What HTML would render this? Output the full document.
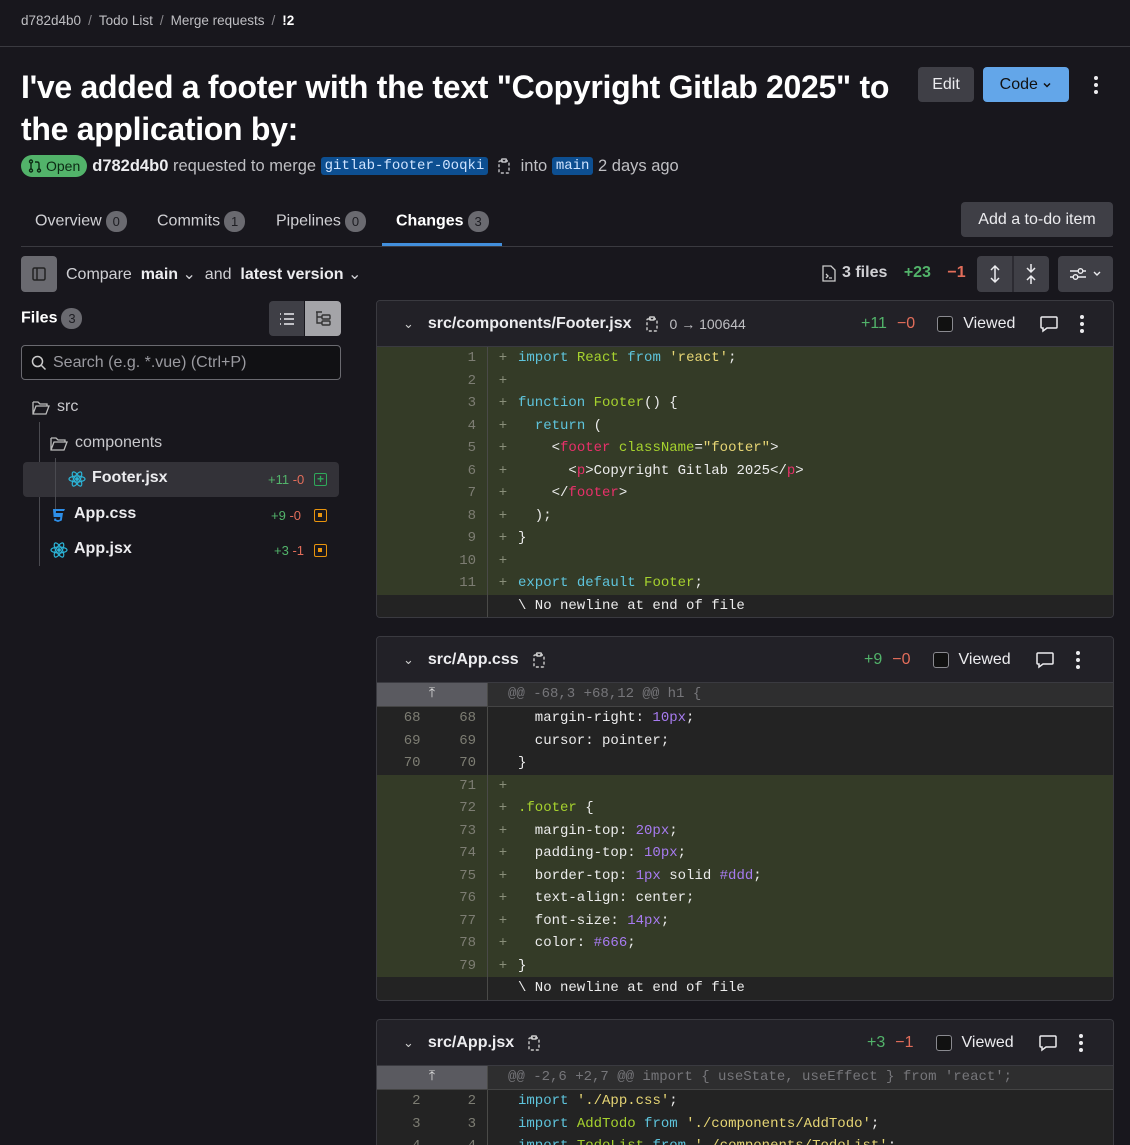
<!DOCTYPE html>
<html><head><meta charset="utf-8">
<style>
*{box-sizing:border-box;margin:0;padding:0}
html,body{width:1130px;height:1145px;overflow:hidden}
body{background:#18171d;color:#ececef;font-family:"Liberation Sans",sans-serif;position:relative}
.a{position:absolute;white-space:nowrap}
.bc{top:13px;left:21px;font-size:13.5px;color:#bfbfc3}
.bc span{margin:0 7px;color:#89888d}
.hr{position:absolute;left:0;right:0;top:46px;height:1px;background:#3a3a40}
h1{position:absolute;left:21px;top:66px;font-size:32px;line-height:42px;font-weight:bold;color:#fff;letter-spacing:-0.3px;width:890px}
.btn{position:absolute;border-radius:4px;font-size:16px;display:flex;align-items:center;justify-content:center}
.badge{display:inline-block;background:#6a6a70;color:#1d1d22;border-radius:10px;min-width:21px;height:21px;line-height:21px;text-align:center;font-size:13px;margin-left:4px;vertical-align:middle}
.mono{font-family:"Liberation Mono",monospace}
.pill{background:#0d4f91;color:#d0e4ff;border-radius:3px;padding:1px 4px;font-size:14px}
.diff{position:absolute;left:376px;width:738px;border:1px solid #3a3a40;border-radius:4px;overflow:hidden;background:#222127}
.dh{height:46px;display:flex;align-items:center;background:#222127;border-bottom:1px solid #3a3a40;font-size:16px;position:relative}
.row{height:22.5px;display:flex;font-family:"Liberation Mono",monospace;font-size:14px;line-height:22.5px}
.row .n1,.row .n2{text-align:right;color:#7d7d73}
.row .n1{width:55px;padding-right:11px}
.row .n2{width:56px;padding-right:11px}
.row .g{width:111px;display:flex;border-right:1px solid #4a4a48}
.row .p{width:30px;text-align:center;color:#8a8f7a}
.row .c{color:#ececec;white-space:pre}
.add{background:#343b27}
.ctx{background:#232323}
.hunk{height:24px;background:#2e2e2f;border-bottom:1px solid #444}
.hunk .g{background:#5a5a60;justify-content:center;color:#ddd}
.hunk .c{color:#76767a;padding-left:20px}
.k{color:#5ec4dc}.i{color:#a6d22e}.s{color:#e6d574}.t{color:#e8306a}.num{color:#a77bf0}
.vw{display:flex;align-items:center;gap:10px;color:#ececef}
.cb{width:16px;height:16px;border:1px solid #8a8a90;border-radius:3px;background:#111}
.tr{font-size:16px;color:#ececef}
</style></head><body>
<div class="a bc">d782d4b0<span>/</span>Todo List<span>/</span>Merge requests<span>/</span><b style="color:#fff">!2</b></div>
<div class="hr"></div>
<h1>I've added a footer with the text "Copyright Gitlab 2025" to the application by:</h1>
<div class="btn" style="left:918px;top:67px;width:56px;height:35px;background:#3f3f46;color:#ececef">Edit</div>
<div class="btn" style="left:983px;top:67px;width:86px;height:35px;background:#63a6e9;color:#111">Code&nbsp;<svg width="10" height="10" viewBox="0 0 10 10"><path d="M2 3.5l3 3 3-3" stroke="#111" stroke-width="1.5" fill="none"/></svg></div>
<svg class="a" style="left:1091px;top:75px" width="10" height="20"><circle cx="5" cy="3" r="2" fill="#ececef"/><circle cx="5" cy="10" r="2" fill="#ececef"/><circle cx="5" cy="17" r="2" fill="#ececef"/></svg>
<div class="a" style="left:21px;top:155px;height:22px;display:flex;align-items:center;font-size:16.5px;color:#bfbfc3">
<span style="background:#52b36a;color:#0c2a14;border-radius:11px;padding:2px 7px;font-size:14px;display:flex;align-items:center;gap:4px;height:22px"><svg width="14" height="14" viewBox="0 0 14 14" fill="none" stroke="#0c2a14" stroke-width="1.4"><circle cx="3" cy="2.5" r="1.5"/><circle cx="3" cy="11.5" r="1.5"/><circle cx="11" cy="11.5" r="1.5"/><path d="M3 4v6M11 10V5Q11 3 9 3H7"/></svg>Open</span>
<b style="color:#ececef;margin-left:5px">d782d4b0</b>&nbsp;requested to merge&nbsp;<span class="pill mono">gitlab-footer-0oqki</span>&nbsp;&nbsp;<svg width="14" height="16" viewBox="0 0 14 16" fill="none" stroke="#bfbfc3" stroke-width="1.4"><rect x="2" y="3" width="10" height="12" rx="1" stroke-dasharray="3 2"/><rect x="4.5" y="1" width="5" height="3" rx="1"/></svg>&nbsp;&nbsp;into&nbsp;<span class="pill mono">main</span>&nbsp;2 days ago</div>

<div class="a tr" style="left:35px;top:211px;color:#d0d0d4">Overview<span class="badge">0</span></div>
<div class="a tr" style="left:157px;top:211px;color:#d0d0d4">Commits<span class="badge">1</span></div>
<div class="a tr" style="left:276px;top:211px;color:#d0d0d4">Pipelines<span class="badge">0</span></div>
<div class="a tr" style="left:396px;top:211px;font-weight:bold;color:#fff">Changes<span class="badge" style="font-weight:normal">3</span></div>
<div class="a" style="left:382px;top:243px;width:120px;height:3px;background:#428fdc"></div>
<div class="a" style="left:21px;top:246px;width:1092px;height:1px;background:#3a3a40"></div>
<div class="btn" style="left:961px;top:202px;width:152px;height:35px;background:#3f3f46;color:#ececef">Add a to-do item</div>

<div class="btn" style="left:21px;top:256px;width:36px;height:36px;background:#6a6a70"><svg width="16" height="16" viewBox="0 0 16 16" fill="none" stroke="#222" stroke-width="1.5"><rect x="2" y="2" width="12" height="12" rx="1.5"/><path d="M6 2v12"/></svg></div>
<div class="a" style="left:66px;top:264px;font-size:16px;color:#d0d0d4">Compare <b style="color:#ececef">&nbsp;main</b> ⌄&nbsp; and <b style="color:#ececef">&nbsp;latest version</b> ⌄</div>
<div class="a" style="left:822px;top:264px;font-size:16px;color:#d0d0d4;display:flex;align-items:center;gap:6px"><svg width="14" height="17" viewBox="0 0 14 17" fill="none" stroke="#ccc" stroke-width="1.3"><path d="M1 1h8l4 4v11H1z"/><path d="M4 9l2 2-2 2M7 13h3"/></svg><b>3 files</b>&nbsp;<b style="color:#52b36a">+23</b>&nbsp;<b style="color:#e26d5a">−1</b></div>
<div class="btn" style="left:977px;top:256px;width:72px;height:36px;background:#3f3f46"><svg width="72" height="36"><path d="M18 10v16M14 14l4-4 4 4M14 22l4 4 4-4" stroke="#ececef" stroke-width="1.5" fill="none"/><path d="M36 0v36" stroke="#18171d"/><path d="M54 8v8M54 20v8M50 12l4 4 4-4M50 24l4-4 4 4" stroke="#ececef" stroke-width="1.5" fill="none"/></svg></div>
<div class="btn" style="left:1058px;top:256px;width:55px;height:36px;background:#3f3f46"><svg width="36" height="16" viewBox="0 0 36 16" fill="none" stroke="#ececef" stroke-width="1.4"><path d="M2 5h8M15 5h3M2 11h3M10 11h8"/><circle cx="12.5" cy="5" r="2.3"/><circle cx="7.5" cy="11" r="2.3"/><path d="M26 6l3 3 3-3"/></svg></div>

<!-- sidebar -->
<div class="a" style="left:21px;top:308px;font-size:16px;font-weight:bold;color:#fff">Files<span class="badge" style="font-weight:normal">3</span></div>
<div class="btn" style="left:269px;top:301px;width:35px;height:35px;background:#3f3f46;border-radius:4px 0 0 4px"><svg width="16" height="14" viewBox="0 0 16 14" stroke="#ececef" stroke-width="1.5"><path d="M1 2h1M5 2h10M1 7h1M5 7h10M1 12h1M5 12h10"/></svg></div>
<div class="btn" style="left:305px;top:301px;width:36px;height:35px;background:#a4a4a8;border-radius:0 4px 4px 0"><svg width="18" height="16" viewBox="0 0 18 16" fill="none" stroke="#333" stroke-width="1.4"><path d="M2 1h6M3 1v11h5M3 6h5"/><rect x="8" y="4" width="8" height="4" rx="1"/><rect x="8" y="10" width="8" height="4" rx="1"/></svg></div>
<div class="a" style="left:21px;top:345px;width:320px;height:35px;border:1px solid #6a6a70;border-radius:4px;background:#111114;display:flex;align-items:center;padding-left:9px;gap:6px;font-size:16px;color:#9a9aa0"><svg width="16" height="16" viewBox="0 0 16 16" fill="none" stroke="#ccc" stroke-width="1.5"><circle cx="6.5" cy="6.5" r="5"/><path d="M10.5 10.5l4 4"/></svg>Search (e.g. *.vue) (Ctrl+P)</div>
<svg class="a" style="left:32px;top:400px" width="18" height="16" viewBox="0 0 18 16" fill="none" stroke="#bbb" stroke-width="1.3"><path d="M1 2h5l2 2h7v2M1 2v12h13l3-8H4L1 14"/></svg>
<div class="a" style="left:57px;top:398px;font-size:16px;color:#c8c8cc">src</div>
<div class="a" style="left:39px;top:422px;width:1px;height:144px;background:#4a4a50"></div>
<svg class="a" style="left:50px;top:436px" width="18" height="16" viewBox="0 0 18 16" fill="none" stroke="#bbb" stroke-width="1.3"><path d="M1 2h5l2 2h7v2M1 2v12h13l3-8H4L1 14"/></svg>
<div class="a" style="left:75px;top:434px;font-size:16px;color:#c8c8cc">components</div>
<div class="a" style="left:23px;top:462px;width:316px;height:35px;background:#333238;border-radius:4px"></div>
<div class="a" style="left:55px;top:458px;width:1px;height:55px;background:#4a4a50"></div>
<svg class="a" style="left:68px;top:471px" width="18" height="16" viewBox="0 0 18 16" fill="none" stroke="#2cb5d8" stroke-width="1.2"><ellipse cx="9" cy="8" rx="8" ry="3"/><ellipse cx="9" cy="8" rx="8" ry="3" transform="rotate(60 9 8)"/><ellipse cx="9" cy="8" rx="8" ry="3" transform="rotate(-60 9 8)"/><circle cx="9" cy="8" r="1.3" fill="#2cb5d8"/></svg>
<div class="a" style="left:92px;top:469px;font-size:16px;font-weight:bold;color:#ececef">Footer.jsx</div>
<div class="a" style="left:268px;top:472px;font-size:13px"><span style="color:#52b36a">+11</span> <span style="color:#e26d5a">-0</span></div>
<div class="a" style="left:314px;top:473px;width:13px;height:13px;border:1.5px solid #2fa85a;border-radius:2px;color:#2fa85a;font-size:12px;line-height:10px;text-align:center;font-weight:bold">+</div>
<svg class="a" style="left:51px;top:507px" width="16" height="16" viewBox="0 0 16 16"><path d="M2 2h12l-1 2H5l-.3 2H12l-1.2 7.5L7 15l-4-1.5.3-2h2L5 12.5l2 .6 2-.6.3-2.5H2.6z" fill="#2d8ee8"/></svg>
<div class="a" style="left:74px;top:505px;font-size:16px;font-weight:bold;color:#ececef">App.css</div>
<div class="a" style="left:271px;top:508px;font-size:13px"><span style="color:#52b36a">+9</span> <span style="color:#e26d5a">-0</span></div>
<div class="a" style="left:314px;top:509px;width:13px;height:13px;border:1.5px solid #e9940d;border-radius:2px"><div style="width:4px;height:4px;background:#e9940d;margin:3px"></div></div>
<svg class="a" style="left:50px;top:542px" width="18" height="16" viewBox="0 0 18 16" fill="none" stroke="#2cb5d8" stroke-width="1.2"><ellipse cx="9" cy="8" rx="8" ry="3"/><ellipse cx="9" cy="8" rx="8" ry="3" transform="rotate(60 9 8)"/><ellipse cx="9" cy="8" rx="8" ry="3" transform="rotate(-60 9 8)"/><circle cx="9" cy="8" r="1.3" fill="#2cb5d8"/></svg>
<div class="a" style="left:74px;top:540px;font-size:16px;font-weight:bold;color:#ececef">App.jsx</div>
<div class="a" style="left:274px;top:543px;font-size:13px"><span style="color:#52b36a">+3</span> <span style="color:#e26d5a">-1</span></div>
<div class="a" style="left:314px;top:544px;width:13px;height:13px;border:1.5px solid #e9940d;border-radius:2px"><div style="width:4px;height:4px;background:#e9940d;margin:3px"></div></div>

<!-- diff 1 -->
<div class="diff" style="top:300px">
 <div class="dh"><span style="margin-left:26px;color:#ccc;font-size:13px">⌄</span><b style="margin-left:14px">src/components/Footer.jsx</b>
 <svg style="margin-left:13px" width="14" height="16" viewBox="0 0 14 16" fill="none" stroke="#ccc" stroke-width="1.4"><rect x="2" y="3" width="10" height="12" rx="1" stroke-dasharray="3 2"/><rect x="4.5" y="1" width="5" height="3" rx="1"/></svg>
 <span style="margin-left:11px;color:#bfbfc3;font-size:14px">0 → 100644</span>
 <div class="vw" style="position:absolute;left:484px"><span style="color:#52b36a">+11</span><span style="color:#e26d5a">−0</span><span class="cb" style="margin-left:12px"></span>Viewed
 <svg style="margin-left:14px" width="20" height="18" viewBox="0 0 20 18" fill="none" stroke="#ececef" stroke-width="1.5"><path d="M3 2h14a1 1 0 011 1v9a1 1 0 01-1 1H8l-4 3v-3H3a1 1 0 01-1-1V3a1 1 0 011-1z"/></svg>
 <svg style="margin-left:10px" width="6" height="20"><circle cx="3" cy="3" r="2" fill="#ececef"/><circle cx="3" cy="10" r="2" fill="#ececef"/><circle cx="3" cy="17" r="2" fill="#ececef"/></svg></div>
 </div>
 <div class="row add"><div class="g"><span class="n1"></span><span class="n2">1</span></div><span class="p">+</span><span class="c"><span class="k">import</span> <span class="i">React</span> <span class="k">from</span> <span class="s">'react'</span>;</span></div>
 <div class="row add"><div class="g"><span class="n1"></span><span class="n2">2</span></div><span class="p">+</span><span class="c"></span></div>
 <div class="row add"><div class="g"><span class="n1"></span><span class="n2">3</span></div><span class="p">+</span><span class="c"><span class="k">function</span> <span class="i">Footer</span>() {</span></div>
 <div class="row add"><div class="g"><span class="n1"></span><span class="n2">4</span></div><span class="p">+</span><span class="c">  <span class="k">return</span> (</span></div>
 <div class="row add"><div class="g"><span class="n1"></span><span class="n2">5</span></div><span class="p">+</span><span class="c">    &lt;<span class="t">footer</span> <span class="i">className</span>=<span class="s">"footer"</span>&gt;</span></div>
 <div class="row add"><div class="g"><span class="n1"></span><span class="n2">6</span></div><span class="p">+</span><span class="c">      &lt;<span class="t">p</span>&gt;Copyright Gitlab 2025&lt;/<span class="t">p</span>&gt;</span></div>
 <div class="row add"><div class="g"><span class="n1"></span><span class="n2">7</span></div><span class="p">+</span><span class="c">    &lt;/<span class="t">footer</span>&gt;</span></div>
 <div class="row add"><div class="g"><span class="n1"></span><span class="n2">8</span></div><span class="p">+</span><span class="c">  );</span></div>
 <div class="row add"><div class="g"><span class="n1"></span><span class="n2">9</span></div><span class="p">+</span><span class="c">}</span></div>
 <div class="row add"><div class="g"><span class="n1"></span><span class="n2">10</span></div><span class="p">+</span><span class="c"></span></div>
 <div class="row add"><div class="g"><span class="n1"></span><span class="n2">11</span></div><span class="p">+</span><span class="c"><span class="k">export</span> <span class="k">default</span> <span class="i">Footer</span>;</span></div>
 <div class="row ctx"><div class="g"></div><span class="p"></span><span class="c">\ No newline at end of file</span></div>
</div>

<!-- diff 2 -->
<div class="diff" style="top:636px">
 <div class="dh"><span style="margin-left:26px;color:#ccc;font-size:13px">⌄</span><b style="margin-left:14px">src/App.css</b>
 <svg style="margin-left:13px" width="14" height="16" viewBox="0 0 14 16" fill="none" stroke="#ccc" stroke-width="1.4"><rect x="2" y="3" width="10" height="12" rx="1" stroke-dasharray="3 2"/><rect x="4.5" y="1" width="5" height="3" rx="1"/></svg>
 <div class="vw" style="position:absolute;left:487px"><span style="color:#52b36a">+9</span><span style="color:#e26d5a">−0</span><span class="cb" style="margin-left:12px"></span>Viewed
 <svg style="margin-left:14px" width="20" height="18" viewBox="0 0 20 18" fill="none" stroke="#ececef" stroke-width="1.5"><path d="M3 2h14a1 1 0 011 1v9a1 1 0 01-1 1H8l-4 3v-3H3a1 1 0 01-1-1V3a1 1 0 011-1z"/></svg>
 <svg style="margin-left:10px" width="6" height="20"><circle cx="3" cy="3" r="2" fill="#ececef"/><circle cx="3" cy="10" r="2" fill="#ececef"/><circle cx="3" cy="17" r="2" fill="#ececef"/></svg></div>
 </div>
 <div class="row hunk"><div class="g">⤒</div><span class="c">@@ -68,3 +68,12 @@ h1 {</span></div>
 <div class="row ctx"><div class="g"><span class="n1">68</span><span class="n2">68</span></div><span class="p"></span><span class="c">  margin-right: <span class="num">10px</span>;</span></div>
 <div class="row ctx"><div class="g"><span class="n1">69</span><span class="n2">69</span></div><span class="p"></span><span class="c">  cursor: pointer;</span></div>
 <div class="row ctx"><div class="g"><span class="n1">70</span><span class="n2">70</span></div><span class="p"></span><span class="c">}</span></div>
 <div class="row add"><div class="g"><span class="n1"></span><span class="n2">71</span></div><span class="p">+</span><span class="c"></span></div>
 <div class="row add"><div class="g"><span class="n1"></span><span class="n2">72</span></div><span class="p">+</span><span class="c"><span class="i">.footer</span> {</span></div>
 <div class="row add"><div class="g"><span class="n1"></span><span class="n2">73</span></div><span class="p">+</span><span class="c">  margin-top: <span class="num">20px</span>;</span></div>
 <div class="row add"><div class="g"><span class="n1"></span><span class="n2">74</span></div><span class="p">+</span><span class="c">  padding-top: <span class="num">10px</span>;</span></div>
 <div class="row add"><div class="g"><span class="n1"></span><span class="n2">75</span></div><span class="p">+</span><span class="c">  border-top: <span class="num">1px</span> solid <span class="num">#ddd</span>;</span></div>
 <div class="row add"><div class="g"><span class="n1"></span><span class="n2">76</span></div><span class="p">+</span><span class="c">  text-align: center;</span></div>
 <div class="row add"><div class="g"><span class="n1"></span><span class="n2">77</span></div><span class="p">+</span><span class="c">  font-size: <span class="num">14px</span>;</span></div>
 <div class="row add"><div class="g"><span class="n1"></span><span class="n2">78</span></div><span class="p">+</span><span class="c">  color: <span class="num">#666</span>;</span></div>
 <div class="row add"><div class="g"><span class="n1"></span><span class="n2">79</span></div><span class="p">+</span><span class="c">}</span></div>
 <div class="row ctx"><div class="g"></div><span class="p"></span><span class="c">\ No newline at end of file</span></div>
</div>

<!-- diff 3 -->
<div class="diff" style="top:1019px;height:126px;border-bottom:none;border-radius:4px 4px 0 0">
 <div class="dh"><span style="margin-left:26px;color:#ccc;font-size:13px">⌄</span><b style="margin-left:14px">src/App.jsx</b>
 <svg style="margin-left:13px" width="14" height="16" viewBox="0 0 14 16" fill="none" stroke="#ccc" stroke-width="1.4"><rect x="2" y="3" width="10" height="12" rx="1" stroke-dasharray="3 2"/><rect x="4.5" y="1" width="5" height="3" rx="1"/></svg>
 <div class="vw" style="position:absolute;left:490px"><span style="color:#52b36a">+3</span><span style="color:#e26d5a">−1</span><span class="cb" style="margin-left:12px"></span>Viewed
 <svg style="margin-left:14px" width="20" height="18" viewBox="0 0 20 18" fill="none" stroke="#ececef" stroke-width="1.5"><path d="M3 2h14a1 1 0 011 1v9a1 1 0 01-1 1H8l-4 3v-3H3a1 1 0 01-1-1V3a1 1 0 011-1z"/></svg>
 <svg style="margin-left:10px" width="6" height="20"><circle cx="3" cy="3" r="2" fill="#ececef"/><circle cx="3" cy="10" r="2" fill="#ececef"/><circle cx="3" cy="17" r="2" fill="#ececef"/></svg></div>
 </div>
 <div class="row hunk"><div class="g">⤒</div><span class="c">@@ -2,6 +2,7 @@ import { useState, useEffect } from 'react';</span></div>
 <div class="row ctx"><div class="g"><span class="n1">2</span><span class="n2">2</span></div><span class="p"></span><span class="c"><span class="k">import</span> <span class="s">'./App.css'</span>;</span></div>
 <div class="row ctx"><div class="g"><span class="n1">3</span><span class="n2">3</span></div><span class="p"></span><span class="c"><span class="k">import</span> <span class="i">AddTodo</span> <span class="k">from</span> <span class="s">'./components/AddTodo'</span>;</span></div>
 <div class="row ctx"><div class="g"><span class="n1">4</span><span class="n2">4</span></div><span class="p"></span><span class="c"><span class="k">import</span> <span class="i">TodoList</span> <span class="k">from</span> <span class="s">'./components/TodoList'</span>;</span></div>
</div>
</body></html>
